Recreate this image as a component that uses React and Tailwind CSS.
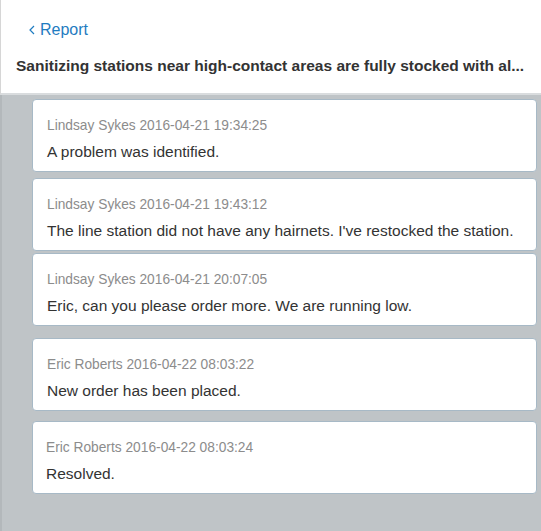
import React from "react";

const comments = [
  { who: "Lindsay Sykes 2016-04-21 19:34:25", text: "A problem was identified.", mt: "mt-[4px]", pl: "pl-[14px]" },
  { who: "Lindsay Sykes 2016-04-21 19:43:12", text: "The line station did not have any hairnets. I've restocked the station.", mt: "mt-[6px]", pl: "pl-[14px]" },
  { who: "Lindsay Sykes 2016-04-21 20:07:05", text: "Eric, can you please order more. We are running low.", mt: "mt-[2px]", pl: "pl-[14px]" },
  { who: "Eric Roberts 2016-04-22 08:03:22", text: "New order has been placed.", mt: "mt-[12px]", pl: "pl-[14px]" },
  { who: "Eric Roberts 2016-04-22 08:03:24", text: "Resolved.", mt: "mt-[10px]", pl: "pl-[13px]" },
];

export default function App() {
  return (
    <div
      className="w-[541px] h-[531px] flex flex-col overflow-hidden"
      style={{ fontFamily: '"Liberation Sans", Arial, sans-serif' }}
    >
      <div className="h-[95px] shrink-0 bg-white border-l border-[#d6d6d6] border-b-2 border-b-[#d9dcde] flex flex-col">
        <div className="flex items-center gap-[5px] pl-[28px] pt-[20px] h-[19px] box-content text-[#1f7cc1] text-[16px] leading-[19px]">
          <svg width="6" height="10" viewBox="0 0 6 10" fill="none" className="mt-[1px]">
            <path d="M5 1 L1 5 L5 9" stroke="#1f7cc1" strokeWidth="1.2" />
          </svg>
          <span>Report</span>
        </div>
        <div className="pl-[15px] mt-[17px] text-[15.5px] leading-[20px] font-bold text-[#333] whitespace-nowrap">
          Sanitizing stations near high-contact areas are fully stocked with al...
        </div>
      </div>
      <div className="flex-1 bg-[#bfc4c7] border-l-2 border-[#b3b8bb] pl-[30px] pr-[4px] flex flex-col">
        {comments.map((c, i) => (
          <div
            key={i}
            className={`${c.mt} h-[73px] shrink-0 bg-white rounded-[4px] border border-[#a7b9c6] ${c.pl} pt-[16px] flex flex-col`}
          >
            <div className="text-[13.75px] leading-[20px] text-[#8c8c8c]">{c.who}</div>
            <div className="mt-[5px] text-[15.5px] leading-[22px] text-[#333]">{c.text}</div>
          </div>
        ))}
      </div>
    </div>
  );
}
